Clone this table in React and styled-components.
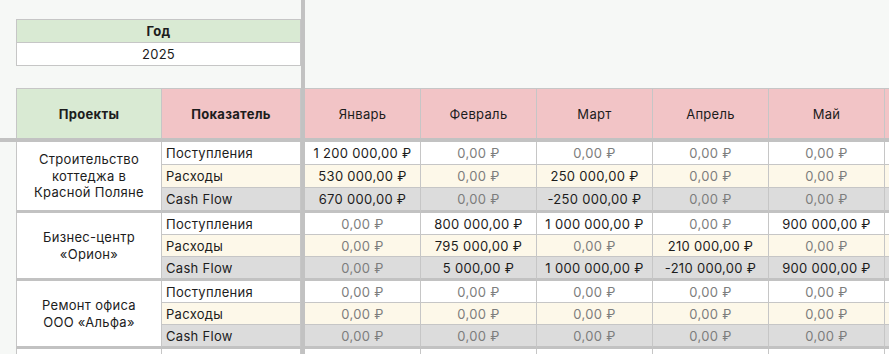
import React from "react";
import styled, { createGlobalStyle } from "styled-components";

const GlobalStyle = createGlobalStyle`
  html, body {
    margin: 0;
    padding: 0;
    background: #f6f8f6;
  }
  body {
    font-family: "Inter", "Noto Sans", "DejaVu Sans", sans-serif;
  }
`;

const LINE = "#c6c6c6";
const BAR = "#c2c2c2";
const COLS = "16px 146px 139px 4px repeat(6, 116px)";

const tones = {
  white: "#ffffff",
  yellow: "#fdf8e9",
  gray: "#dcdcdc",
  green: "#d9ead3",
  pink: "#f2c4c6",
};

// the sixth column only peeks in at the right edge, so it stays empty
const months = ["Январь", "Февраль", "Март", "Апрель", "Май", ""];

const Z = "0,00\u00a0₽";

const projects = [
  {
    name: "Строительство\nкоттеджа в\nКрасной Поляне",
    row: 23,
    rows: [
      ["1\u00a0200\u00a0000,00\u00a0₽", Z, Z, Z, Z, ""],
      ["530\u00a0000,00\u00a0₽", Z, "250\u00a0000,00\u00a0₽", Z, Z, ""],
      ["670\u00a0000,00\u00a0₽", Z, "-250\u00a0000,00\u00a0₽", Z, Z, ""],
    ],
  },
  {
    name: "Бизнес-центр\n«Орион»",
    row: 22,
    rows: [
      [Z, "800\u00a0000,00\u00a0₽", "1\u00a0000\u00a0000,00\u00a0₽", Z, "900\u00a0000,00\u00a0₽", ""],
      [Z, "795\u00a0000,00\u00a0₽", Z, "210\u00a0000,00\u00a0₽", Z, ""],
      [Z, "5\u00a0000,00\u00a0₽", "1\u00a0000\u00a0000,00\u00a0₽", "-210\u00a0000,00\u00a0₽", "900\u00a0000,00\u00a0₽", ""],
    ],
  },
  {
    name: "Ремонт офиса\nООО «Альфа»",
    row: 22,
    rows: [
      [Z, Z, Z, Z, Z, ""],
      [Z, Z, Z, Z, Z, ""],
      [Z, Z, Z, Z, Z, ""],
    ],
  },
  {
    name: "",
    row: 22,
    rows: [
      ["", "", "", "", "", ""],
      ["", "", "", "", "", ""],
      ["", "", "", "", "", ""],
    ],
  },
];

const labels = [
  ["Поступления", "white"],
  ["Расходы", "yellow"],
  ["Cash Flow", "gray"],
];

export default function App() {
  return (
    <>
      <GlobalStyle />
      <Sheet>
        <TopPane>
          <YearHead>Год</YearHead>
          <YearValue>2025</YearValue>
          <FrozenCol />
          <HeadCell $col={2} $tone="green" $bold $first>
            Проекты
          </HeadCell>
          <HeadCell $col={3} $tone="pink" $bold>
            Показатель
          </HeadCell>
          {months.map((m, i) => (
            <HeadCell key={i} $col={i + 5} $tone="pink">
              {m}
            </HeadCell>
          ))}
        </TopPane>
        <FrozenRow />
        <Body>
          {projects.map((p, gi) => (
            <Group key={gi} $row={p.row}>
              <NameCell>{p.name}</NameCell>
              <FrozenCol />
              {p.rows.map((vals, ri) => {
                const [label, tone] = labels[ri];
                const last = ri === 2;
                return (
                  <React.Fragment key={ri}>
                    <LabelCell $tone={tone} $last={last} $row={ri + 1}>
                      {p.name ? label : ""}
                    </LabelCell>
                    {vals.map((v, ci) => (
                      <ValueCell
                        key={ci}
                        $tone={tone}
                        $last={last}
                        $muted={v === Z}
                        $row={ri + 1}
                        $col={ci + 5}
                      >
                        {v}
                      </ValueCell>
                    ))}
                  </React.Fragment>
                );
              })}
            </Group>
          ))}
        </Body>
      </Sheet>
    </>
  );
}

const Sheet = styled.div`
  width: 889px;
  height: 354px;
  overflow: hidden;
  display: flex;
  flex-direction: column;
  font-size: 13px;
  letter-spacing: 0.3px;
  color: #1c1c1c;
  background: #f6f8f6;
`;

const TopPane = styled.div`
  flex-shrink: 0;
  display: grid;
  grid-template-columns: ${COLS};
  grid-template-rows: 19px 24px 23px 22px 50px;
`;

const FrozenCol = styled.div`
  grid-column: 4;
  grid-row: 1 / -1;
  background: ${BAR};
`;

const FrozenRow = styled.div`
  flex-shrink: 0;
  height: 4px;
  background: ${BAR};
`;

const Centered = styled.div`
  display: flex;
  align-items: center;
  justify-content: center;
  box-sizing: border-box;
  white-space: nowrap;
  overflow: hidden;
`;

const YearHead = styled(Centered)`
  grid-column: 2 / 4;
  grid-row: 2;
  background: ${tones.green};
  border: 1px solid ${LINE};
  font-weight: 700;
`;

const YearValue = styled(Centered)`
  grid-column: 2 / 4;
  grid-row: 3;
  background: #ffffff;
  border: 1px solid ${LINE};
  border-top: none;
`;

const HeadCell = styled(Centered)`
  grid-row: 5;
  grid-column: ${(p) => p.$col};
  background: ${(p) => tones[p.$tone]};
  border-top: 1px solid ${LINE};
  border-right: 1px solid ${LINE};
  border-left: ${(p) => (p.$first ? `1px solid ${LINE}` : "none")};
  font-weight: ${(p) => (p.$bold ? 700 : 400)};
`;

const Body = styled.div`
  display: flex;
  flex-direction: column;
`;

const Group = styled.div`
  flex-shrink: 0;
  display: grid;
  grid-template-columns: ${COLS};
  grid-template-rows: ${(p) => `${p.$row}px ${p.$row}px ${p.$row + 2}px`};
`;

const NameCell = styled.div`
  grid-column: 2;
  grid-row: 1 / -1;
  display: flex;
  align-items: center;
  justify-content: center;
  box-sizing: border-box;
  padding: 0 6px;
  background: #ffffff;
  border-left: 1px solid ${LINE};
  border-right: 1px solid ${LINE};
  border-bottom: 3px solid ${BAR};
  white-space: pre-line;
  text-align: center;
  line-height: 16.5px;
`;

const LabelCell = styled.div`
  grid-column: 3;
  grid-row: ${(p) => p.$row};
  display: flex;
  align-items: center;
  box-sizing: border-box;
  padding: 0 4px;
  background: ${(p) => tones[p.$tone]};
  border-right: 1px solid ${LINE};
  border-bottom: ${(p) => (p.$last ? `3px solid ${BAR}` : `1px solid ${LINE}`)};
  white-space: nowrap;
`;

const ValueCell = styled(Centered)`
  grid-row: ${(p) => p.$row};
  grid-column: ${(p) => p.$col};
  background: ${(p) => tones[p.$tone]};
  border-right: 1px solid ${LINE};
  border-bottom: ${(p) => (p.$last ? `3px solid ${BAR}` : `1px solid ${LINE}`)};
  color: ${(p) => (p.$muted ? "#7d7d7d" : "#1c1c1c")};
`;
